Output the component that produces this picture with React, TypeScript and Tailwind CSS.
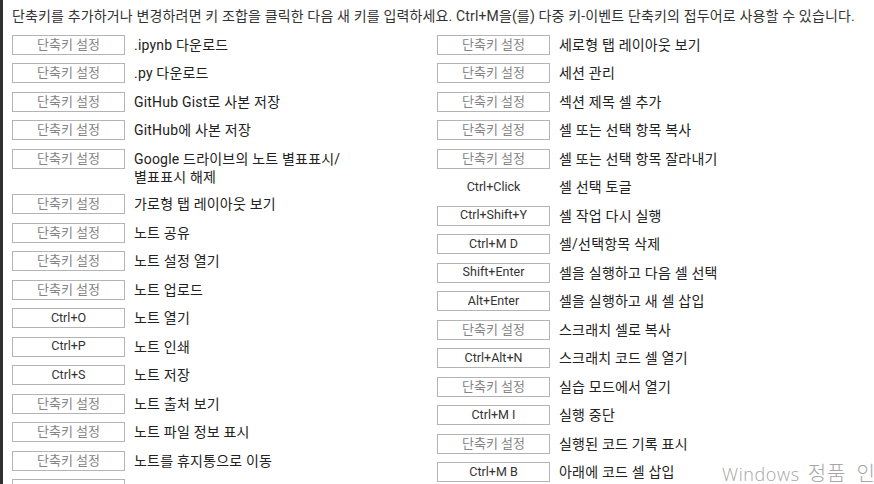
import React from "react";

type Shortcut = {
  keys: string | null; // null = not set yet
  label: string;
  plain?: boolean; // fixed shortcut, no editable box
};

const leftColumn: Shortcut[] = [
  { keys: null, label: ".ipynb 다운로드" },
  { keys: null, label: ".py 다운로드" },
  { keys: null, label: "GitHub Gist로 사본 저장" },
  { keys: null, label: "GitHub에 사본 저장" },
  { keys: null, label: "Google 드라이브의 노트 별표표시/ 별표표시 해제" },
  { keys: null, label: "가로형 탭 레이아웃 보기" },
  { keys: null, label: "노트 공유" },
  { keys: null, label: "노트 설정 열기" },
  { keys: null, label: "노트 업로드" },
  { keys: "Ctrl+O", label: "노트 열기" },
  { keys: "Ctrl+P", label: "노트 인쇄" },
  { keys: "Ctrl+S", label: "노트 저장" },
  { keys: null, label: "노트 출처 보기" },
  { keys: null, label: "노트 파일 정보 표시" },
  { keys: null, label: "노트를 휴지통으로 이동" },
];

const rightColumn: Shortcut[] = [
  { keys: null, label: "세로형 탭 레이아웃 보기" },
  { keys: null, label: "세션 관리" },
  { keys: null, label: "섹션 제목 셀 추가" },
  { keys: null, label: "셀 또는 선택 항목 복사" },
  { keys: null, label: "셀 또는 선택 항목 잘라내기" },
  { keys: "Ctrl+Click", label: "셀 선택 토글", plain: true },
  { keys: "Ctrl+Shift+Y", label: "셀 작업 다시 실행" },
  { keys: "Ctrl+M D", label: "셀/선택항목 삭제" },
  { keys: "Shift+Enter", label: "셀을 실행하고 다음 셀 선택" },
  { keys: "Alt+Enter", label: "셀을 실행하고 새 셀 삽입" },
  { keys: null, label: "스크래치 셀로 복사" },
  { keys: "Ctrl+Alt+N", label: "스크래치 코드 셀 열기" },
  { keys: null, label: "실습 모드에서 열기" },
  { keys: "Ctrl+M I", label: "실행 중단" },
  { keys: null, label: "실행된 코드 기록 표시" },
  { keys: "Ctrl+M B", label: "아래에 코드 셀 삽입" },
];

const ShortcutRow = ({ item }: { item: Shortcut }) => (
  <div className="flex items-start mb-[8.5px]">
    <div
      className={`w-[113px] h-[20px] shrink-0 flex items-center justify-center bg-white border ${
        item.plain ? "border-transparent" : "border-[#b4b4b4]"
      } ${item.keys ? "text-[12.5px] text-[#333333]" : "text-[13px] text-[#858585]"}`}
    >
      {item.keys ?? "단축키 설정"}
    </div>
    <div className="ml-[9px] w-[215px] pt-[1px] text-[14px] leading-[18px] tracking-[0.2px] text-[#222222] break-keep">
      {item.label}
    </div>
  </div>
);

export default function App() {
  return (
    <div
      className="relative flex w-[874px] h-[484px] overflow-hidden bg-white"
      style={{ fontFamily: 'Roboto, "Noto Sans CJK KR", sans-serif' }}
    >
      <div className="w-[3px] shrink-0 bg-[#303030]" />
      <div className="flex-1 pl-[9px] pt-[7px]">
        <p className="text-[14px] leading-[18px] tracking-[0.15px] text-[#333333] whitespace-nowrap">
          단축키를 추가하거나 변경하려면 키 조합을 클릭한 다음 새 키를 입력하세요. Ctrl+M을(를) 다중 키-이벤트 단축키의 접두어로 사용할 수 있습니다.
        </p>
        <div className="flex mt-[9.5px]">
          <div className="w-[425px] shrink-0">
            {leftColumn.map((item, i) => (
              <ShortcutRow key={i} item={item} />
            ))}
            {/* next row, only its top edge shows */}
            <div className="w-[113px] h-[20px] border border-[#b4b4b4] bg-white" />
          </div>
          <div className="flex-1">
            {rightColumn.map((item, i) => (
              <ShortcutRow key={i} item={item} />
            ))}
          </div>
        </div>
      </div>

      {/* activation watermark over the page */}
      <div
        className="absolute left-[722px] top-[459px] flex items-baseline whitespace-nowrap text-[#a6a6a6] font-light"
        style={{ fontFamily: '"Open Sans", "Noto Sans CJK KR", sans-serif' }}
      >
        <span className="text-[18px] tracking-[0.6px]">Windows</span>
        <span className="ml-[8px] text-[20px] tracking-[1px]">정품</span>
        <span className="ml-[10px] text-[20px]">인증</span>
      </div>
    </div>
  );
}
